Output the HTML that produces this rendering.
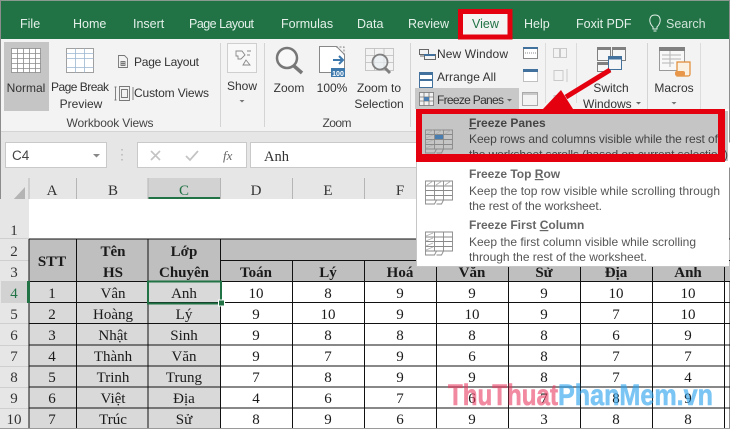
<!DOCTYPE html>
<html><head><meta charset="utf-8"><style>
html,body{margin:0;padding:0;background:#fff;overflow:hidden}
svg{display:block}
.u{font-family:"Liberation Sans","Noto Sans CJK JP",sans-serif;font-size:12px;fill:#444}
.t{fill:#e4f0e9;font-size:12.5px}
.s{font-family:"Liberation Serif","DejaVu Serif",serif;font-size:15px;fill:#1a1a1a;text-anchor:middle}
.b{font-weight:bold;font-size:15px}
.h{font-family:"Liberation Serif",serif;font-size:15px;fill:#333;text-anchor:middle}
.m{font-size:12px;fill:#555}
.mb{font-size:12px;fill:#444;font-weight:bold}
.c{text-anchor:middle}
.w{font-family:"Liberation Sans",sans-serif;font-weight:bold;font-size:30px;stroke-width:.6}
</style></head><body>
<svg width="730" height="429" viewBox="0 0 730 429" xmlns="http://www.w3.org/2000/svg">
<rect width="730" height="429" fill="#fff"/>
<!-- title bar -->
<rect x="0" y="0" width="730" height="39" fill="#217346"/>
<rect x="0" y="0" width="730" height="1" fill="#8a9a90"/>
<!-- ribbon -->
<rect x="0" y="39" width="730" height="93" fill="#f3f3f3"/>
<rect x="0" y="131" width="730" height="1" fill="#d4d4d4"/>
<rect x="0" y="132" width="730" height="67" fill="#e6e6e6"/>
<rect x="0" y="0" width="1" height="429" fill="#8c8c8c"/>
<rect x="729" y="0" width="1" height="429" fill="#8c8c8c"/>
<!-- tabs -->
<text class="u t" x="20" y="28">File</text>
<text class="u t" x="73" y="28">Home</text>
<text class="u t" x="133" y="28">Insert</text>
<text class="u t" x="189" y="28" textLength="65">Page Layout</text>
<text class="u t" x="281" y="28">Formulas</text>
<text class="u t" x="357" y="28">Data</text>
<text class="u t" x="408" y="28">Review</text>
<rect x="460.500" y="11.500" width="49.500" height="25.500" fill="#f3f3f3" stroke="#e4000f" stroke-width="5"/>
<text class="u" x="472" y="28" style="font-size:12.5px;fill:#217346">View</text>
<text class="u t" x="524" y="28">Help</text>
<text class="u t" x="576" y="28">Foxit PDF</text>
<path d="M653 27c-5-5-4-12 2-12s7 7 2 12v2h-4z M653.500 31h3" fill="none" stroke="#e4f0e9" stroke-width="1"/>
<text class="u t" x="666" y="28" style="fill:#cfe3d8">Search</text>
<!-- group: Workbook views -->
<rect x="4" y="42" width="45" height="69" fill="#c5c5c5"/>
<g fill="#fff" stroke="#8a8a8a" stroke-width=".8">
<rect x="11.500" y="48.500" width="29" height="24"/>
<path d="M11.500 53.500h29M11.500 58.500h29M11.500 63.500h29M11.500 68.500h29M17.500 48.500v24M23.500 48.500v24M29.500 48.500v24M35.500 48.500v24" fill="none"/>
<rect x="66.500" y="48.500" width="27" height="24"/>
<path d="M66.500 53.500h27M66.500 58.500h27M66.500 67.500h27M75.500 48.500v24M84.500 48.500v24" fill="none" stroke="#9cb7d2"/>
</g>
<text class="u c" x="26" y="92" style="fill:#333">Normal</text>
<text class="u c" x="80" y="91" style="fill:#333" textLength="58">Page Break</text>
<text class="u c" x="81" y="108" style="fill:#333">Preview</text>
<path d="M118.500 55.500h6l3 3v9h-9z M121 61.500h4v4h-4z M123 61.500v4M121 63.500h4" fill="none" stroke="#777" stroke-width=".9"/>
<text class="u" x="134" y="66" style="fill:#333" textLength="65">Page Layout</text>
<path d="M119.500 86.500h10v14h-10z M121.500 89.500h6v8h-6z M115.500 87v13M116.500 87h-2M116.500 100h-2M133 87v13" fill="none" stroke="#777" stroke-width=".9"/>
<text class="u" x="134" y="97" style="fill:#333" textLength="75">Custom Views</text>
<text class="u c" x="110" y="127" style="fill:#444" textLength="87">Workbook Views</text>
<rect x="220" y="43" width="1" height="84" fill="#d4d4d4"/>
<!-- show -->
<rect x="227.500" y="43.500" width="29" height="29" fill="#f8f8f8" stroke="#cfcfcf"/>
<path d="M236 51h6l3 4-4 4h-3v-3h-2z M247 51h4M247 55h3M243 65l3-5 4 5z" fill="none" stroke="#888" stroke-width=".9"/>
<text class="u c" x="242" y="90" style="fill:#333">Show</text>
<path d="M239.500 100h5l-2.500 2.500z" fill="#777"/>
<rect x="264" y="43" width="1" height="84" fill="#d4d4d4"/>
<!-- zoom -->
<circle cx="287" cy="58" r="10" fill="#f8f8f8" stroke="#777" stroke-width="2.500"/>
<path d="M294 66l8 7" stroke="#777" stroke-width="3.500" fill="none"/>
<text class="u c" x="289" y="92" style="fill:#333">Zoom</text>
<path d="M319.500 46.500h17l8 8v18h-25z" fill="#fff" stroke="#888"/>
<path d="M336 47h8v8" fill="none" stroke="#888" stroke-dasharray="2 1.500"/>
<path d="M333 60h10M339 56l4 4-4 4" fill="none" stroke="#3d78ad" stroke-width="2"/>
<rect x="331" y="68" width="14" height="9" fill="#3d78ad"/>
<text class="u c" x="338" y="76" style="font-size:7px;fill:#fff;font-weight:bold">100</text>
<text class="u c" x="332" y="92" style="fill:#333">100%</text>
<g fill="none" stroke="#bbb" stroke-width=".8"><rect x="365.500" y="48.500" width="28" height="22"/><path d="M365.500 55.500h28M365.500 62.500h28M374.500 48.500v22M384 48.500v22"/></g>
<circle cx="380" cy="62" r="7.500" fill="#e8eef2" fill-opacity=".7" stroke="#808080" stroke-width="1.800"/>
<path d="M385 68l5 5" stroke="#808080" stroke-width="3"/>
<text class="u c" x="379" y="92" style="fill:#333">Zoom to</text>
<text class="u c" x="379" y="108" style="fill:#333">Selection</text>
<text class="u c" x="337" y="127" style="fill:#444" textLength="29">Zoom</text>
<rect x="410" y="43" width="1" height="84" fill="#d4d4d4"/>
<!-- window -->
<path d="M419.500 49.500h9v5h-9zM424.500 54.500h11v5h-11zM420 56h4" fill="#f3f3f3" stroke="#666"/>
<rect x="424" y="54" width="11" height="2" fill="#41719c"/>
<text class="u" x="437" y="58" style="fill:#333" textLength="71">New Window</text>
<rect x="419.500" y="72.500" width="13" height="15" fill="#fff" stroke="#41719c"/>
<rect x="419" y="72" width="14" height="3" fill="#41719c"/><rect x="419" y="79" width="14" height="2" fill="#41719c"/>
<text class="u" x="437" y="81" style="fill:#333" textLength="59">Arrange All</text>
<rect x="415" y="88" width="104" height="21" fill="#c8c8c8"/>
<g fill="#f0f0f0" stroke="#777" stroke-width=".8"><rect x="419.500" y="92.500" width="14" height="13"/><path d="M419.500 97h14M419.500 101h14M424 92.500v13M429 92.500v13" fill="none"/></g>
<rect x="424" y="97" width="5" height="4" fill="#4a7eb0"/>
<text class="u" x="437" y="104" style="fill:#333" textLength="67">Freeze Panes</text>
<path d="M507 99h5l-2.500 2.500z" fill="#666"/>
<rect x="523.500" y="47.500" width="14" height="11" fill="#fff" stroke="#888"/><rect x="523" y="47" width="15" height="2" fill="#41719c"/>
<path d="M525 53h11" stroke="#888" stroke-dasharray="1 1"/>
<rect x="523.500" y="70.500" width="14" height="11" fill="#fff" stroke="#888" stroke-dasharray="1 1"/><rect x="523" y="69" width="15" height="3" fill="#41719c"/>
<rect x="522.500" y="92.500" width="15" height="13" fill="#f3f3f3" stroke="#aaa"/><rect x="523" y="93" width="14" height="2" fill="#c8c8c8"/>
<rect x="545" y="43" width="1" height="60" fill="#dcdcdc"/>
<path d="M553.500 48.500h6v9h-6zM560.500 48.500h6v9h-6z M554 70.500h9v10h-9zM567 69v13" fill="none" stroke="#c9c9c9"/>
<path d="M554 95.500h12v10h-12z" fill="none" stroke="#c9c9c9"/>
<rect x="576" y="43" width="1" height="60" fill="#dcdcdc"/>
<!-- switch windows -->
<g fill="#f6f6f6" stroke="#808080">
<rect x="597.500" y="47.500" width="13" height="13"/><rect x="612.500" y="47.500" width="13" height="13"/><rect x="597.500" y="62.500" width="13" height="9"/>
</g>
<path d="M597 47h14v3h-14zM612 47h14v3h-14zM597 62h14v3h-14z" fill="#808080"/>
<rect x="608.500" y="56.500" width="13" height="13" fill="#f6f6f6" stroke="#41719c"/>
<rect x="608" y="56" width="14" height="3.500" fill="#41719c"/>
<text class="u c" x="611" y="92" style="fill:#333">Switch</text>
<text class="u" x="583" y="108" style="fill:#333">Windows</text>
<path d="M636 102h5l-2.500 2.500z" fill="#666"/>
<rect x="647" y="43" width="1" height="84" fill="#d4d4d4"/>
<!-- macros -->
<rect x="659.500" y="47.500" width="25" height="23" fill="#f8f8f8" stroke="#999"/>
<rect x="659" y="47" width="26" height="4" fill="#808080"/>
<path d="M662 55h19M662 59h19M662 63h12M670 51v16" stroke="#b5b5b5" fill="none"/>
<path d="M677 62h13v12c0 2-1 2-2 2h-11z" fill="#fbf1e3" stroke="#e08a34" stroke-width="1.200"/>
<rect x="675" y="71" width="10" height="5" rx="2" fill="#e8964a"/>
<text class="u c" x="674" y="92" style="fill:#333">Macros</text>
<path d="M671.500 102h5l-2.500 2.500z" fill="#777"/>
<rect x="700" y="43" width="1" height="84" fill="#dcdcdc"/>
<!-- formula bar -->
<rect x="5.500" y="142.500" width="101" height="25" fill="#fff" stroke="#c9c9c9"/>
<text x="12" y="160" style="font-family:'Liberation Sans',sans-serif;font-size:13.500px;fill:#444">C4</text>
<path d="M93 154h7l-3.500 3.500z" fill="#888"/>
<path d="M122 149v1.500M122 154v1.500M122 159v1.500" stroke="#aaa" stroke-width="1.200"/>
<rect x="137.500" y="142.500" width="109" height="25" fill="#fff" stroke="#c9c9c9"/>
<path d="M151 151l9 9M160 151l-9 9" stroke="#c4c4c4" stroke-width="1.600"/>
<path d="M186 156l4 4 8-9" stroke="#c4c4c4" stroke-width="1.800" fill="none"/>
<text x="223" y="160" style="font-family:'Liberation Serif',serif;font-style:italic;font-size:13px;fill:#666">fx</text>
<rect x="250.500" y="142.500" width="480" height="25" fill="#fff" stroke="#c9c9c9"/>
<text x="264" y="161" style="font-family:'Liberation Serif',serif;font-size:14.500px;fill:#333">Anh</text>
<!-- column headers -->
<path d="M25 187v14H12z" fill="#b4b4b4"/>
<rect x="148" y="178" width="73" height="21" fill="#d2d2d2"/>
<rect x="148" y="197" width="73" height="2" fill="#217346"/>
<path d="M29 178v21M76.500 178v21M148 178v21M220.500 178v21M292.500 178v21M364.500 178v21" stroke="#b5b5b5" fill="none"/>
<text class="h" x="52" y="195">A</text><text class="h" x="113" y="195">B</text>
<text class="h" x="184" y="195" style="fill:#217346">C</text><text class="h" x="256" y="195">D</text>
<text class="h" x="328" y="195">E</text><text class="h" x="400" y="195">F</text>
<!-- sheet -->
<rect x="0" y="199" width="29" height="230" fill="#e6e6e6"/>
<rect x="1" y="281" width="27" height="22" fill="#d2d2d2"/>
<rect x="27" y="281" width="2" height="22" fill="#217346"/>
<rect x="29" y="239" width="701" height="42" fill="#bfbfbf"/>
<rect x="29" y="281" width="192" height="148" fill="#d9d9d9"/>
<g stroke="#cfcfcf"><path d="M0 238.500h29M0 260.500h29M0 323.500h29M0 345.500h29M0 366.500h29M0 387.500h29M0 408.500h29" fill="none"/></g>
<g class="h">
<text class="h" x="14" y="235">1</text><text class="h" x="14" y="256">2</text><text class="h" x="14" y="277">3</text>
<text class="h" x="14" y="298" style="fill:#217346">4</text><text class="h" x="14" y="319">5</text><text class="h" x="14" y="340">6</text>
<text class="h" x="14" y="361">7</text><text class="h" x="14" y="382">8</text><text class="h" x="14" y="403">9</text><text class="h" x="14" y="424">10</text>
</g>
<!-- grid -->
<g stroke="#111" stroke-width="1" fill="none">
<path d="M29 239h701M221 260.500h509M29 281.500h701M29 302.500h701M29 323.500h701M29 345h701M29 366h701M29 387h701M29 408h701"/>
<path d="M29 239v190M76.500 239v190M148 239v190M220.500 239v190M292.500 260v169M364.500 260v169M436.500 260v169M508.500 260v169M580.500 260v169M652.500 260v169M724.500 260v169"/>
</g>
<rect x="28" y="281" width="2" height="22" fill="#217346"/>
<!-- header text -->
<text class="s b" x="52" y="266">STT</text>
<text class="s b" x="113" y="256">Tên</text><text class="s b" x="113" y="277">HS</text>
<text class="s b" x="184" y="256">Lớp</text><text class="s b" x="184" y="277">Chuyên</text>
<text class="s b" x="256" y="277">Toán</text><text class="s b" x="328" y="277">Lý</text>
<text class="s b" x="400" y="277">Hoá</text><text class="s b" x="472" y="277">Văn</text><text class="s b" x="544" y="277">Sử</text><text class="s b" x="616" y="277">Địa</text><text class="s b" x="688" y="277">Anh</text>
<!-- rows -->
<text class="s" x="52" y="298">1</text><text class="s" x="113" y="298">Vân</text><text class="s" x="184" y="298">Anh</text><text class="s" x="256" y="298">10</text><text class="s" x="328" y="298">8</text><text class="s" x="400" y="298">9</text><text class="s" x="472" y="298">9</text><text class="s" x="544" y="298">9</text><text class="s" x="616" y="298">10</text><text class="s" x="688" y="298">10</text>
<text class="s" x="52" y="319">2</text><text class="s" x="113" y="319">Hoàng</text><text class="s" x="184" y="319">Lý</text><text class="s" x="256" y="319">9</text><text class="s" x="328" y="319">10</text><text class="s" x="400" y="319">9</text><text class="s" x="472" y="319">10</text><text class="s" x="544" y="319">9</text><text class="s" x="616" y="319">7</text><text class="s" x="688" y="319">10</text>
<text class="s" x="52" y="340">3</text><text class="s" x="113" y="340">Nhật</text><text class="s" x="184" y="340">Sinh</text><text class="s" x="256" y="340">9</text><text class="s" x="328" y="340">8</text><text class="s" x="400" y="340">8</text><text class="s" x="472" y="340">8</text><text class="s" x="544" y="340">8</text><text class="s" x="616" y="340">6</text><text class="s" x="688" y="340">9</text>
<text class="s" x="52" y="361">4</text><text class="s" x="113" y="361">Thành</text><text class="s" x="184" y="361">Văn</text><text class="s" x="256" y="361">9</text><text class="s" x="328" y="361">7</text><text class="s" x="400" y="361">9</text><text class="s" x="472" y="361">6</text><text class="s" x="544" y="361">8</text><text class="s" x="616" y="361">7</text><text class="s" x="688" y="361">7</text>
<text class="s" x="52" y="382">5</text><text class="s" x="113" y="382">Trinh</text><text class="s" x="184" y="382">Trung</text><text class="s" x="256" y="382">7</text><text class="s" x="328" y="382">8</text><text class="s" x="400" y="382">9</text><text class="s" x="472" y="382">9</text><text class="s" x="544" y="382">8</text><text class="s" x="616" y="382">7</text><text class="s" x="688" y="382">4</text>
<text class="s" x="52" y="403">6</text><text class="s" x="113" y="403">Việt</text><text class="s" x="184" y="403">Địa</text><text class="s" x="256" y="403">4</text><text class="s" x="328" y="403">6</text><text class="s" x="400" y="403">7</text><text class="s" x="472" y="403">6</text><text class="s" x="544" y="403">7</text><text class="s" x="616" y="403">8</text><text class="s" x="688" y="403">9</text>
<text class="s" x="52" y="424">7</text><text class="s" x="113" y="424">Trúc</text><text class="s" x="184" y="424">Sử</text><text class="s" x="256" y="424">8</text><text class="s" x="328" y="424">9</text><text class="s" x="400" y="424">6</text><text class="s" x="472" y="424">9</text><text class="s" x="544" y="424">3</text><text class="s" x="616" y="424">8</text><text class="s" x="688" y="424">8</text>
<rect x="0" y="428" width="730" height="1" fill="#9a9a9a"/>
<!-- selection -->
<rect x="148" y="281.500" width="73" height="22" fill="none" stroke="#217346" stroke-width="2"/>
<rect x="218.500" y="300" width="6" height="6" fill="#217346" stroke="#fff"/>
<!-- menu -->
<rect x="416" y="109" width="313" height="158" fill="#fff"/>
<rect x="416" y="162" width="1" height="105" fill="#c6c6c6"/>
<rect x="416" y="266" width="313" height="1" fill="#c6c6c6"/>
<rect x="418" y="111" width="310" height="50" fill="#c5c5c5"/>
<text class="u mb" x="469" y="127"><tspan text-decoration="underline">F</tspan>reeze Panes</text>
<text class="u m" x="469" y="143" style="fill:#444" textLength="249">Keep rows and columns visible while the rest of</text>
<text class="u m" x="469" y="158.500" style="fill:#444" textLength="259">the worksheet scrolls (based on current selection)</text>
<rect x="416" y="109" width="309" height="5" fill="#e4000f"/>
<rect x="416" y="154" width="309" height="8" fill="#e4000f"/>
<rect x="416" y="109" width="6" height="53" fill="#e4000f"/>
<rect x="718" y="109" width="7" height="53" fill="#e4000f"/>
<text class="u mb" x="469" y="178" style="fill:#666">Freeze Top <tspan text-decoration="underline">R</tspan>ow</text>
<text class="u m" x="469" y="195" textLength="251">Keep the top row visible while scrolling through</text>
<text class="u m" x="469" y="210" textLength="133">the rest of the worksheet.</text>
<text class="u mb" x="469" y="229" style="fill:#666">Freeze First <tspan text-decoration="underline">C</tspan>olumn</text>
<text class="u m" x="469" y="246" textLength="227">Keep the first column visible while scrolling</text>
<text class="u m" x="469" y="261" textLength="178">through the rest of the worksheet.</text>
<!-- menu icons -->
<g fill="none" stroke="#8a8a8a" stroke-width=".9">
<path d="M425.500 130h27v19h-27zM425.500 134.500h27M425.500 139.500h27M425.500 144.500h27M434.500 130v19M443.500 130v19M425.500 149v4h9l2-4M436.500 153h5l2-4"/>
<path d="M425.500 181h27v19h-27zM425.500 186h27M425.500 190.500h27M425.500 195.500h27M434.500 181v19M443.500 181v19M425.500 200v4h9l2-4M436.500 204h5l2-4"/>
<path d="M425.500 232h27v19h-27zM425.500 237h27M425.500 241.500h27M425.500 246.500h27M434.500 232v19M443.500 232v19M425.500 251v4h9l2-4M436.500 255h5l2-4"/>
<path d="M427 134l6-4M436 134l6-4M445 134l6-4M426 138l7-3M426 143l7-3M426 148l7-3" stroke="#b0b0b0"/>
<path d="M427 185l6-4M436 185l6-4M445 185l6-4" stroke="#b0b0b0"/>
<path d="M426 236l7-3M426 241l7-3M426 246l7-3M426 250l7-3" stroke="#b0b0b0"/>
</g>
<rect x="435" y="135" width="8" height="4" fill="#4a7eb0"/>
<!-- red arrow -->
<path d="M610 70 L566 97" stroke="#e4000f" stroke-width="5" fill="none"/>
<path d="M543 109 L561 90 L573 109z" fill="#e4000f"/>
<!-- watermark -->
<text class="w" x="448" y="405" textLength="110" lengthAdjust="spacingAndGlyphs" style="fill:#e8375f;stroke:#e8375f;opacity:.58">ThuThuat</text>
<text class="w" x="558" y="405" textLength="155" lengthAdjust="spacingAndGlyphs" style="fill:#2aa2ee;stroke:#2aa2ee;opacity:.62">PhanMem.vn</text>
</svg>
</body></html>
